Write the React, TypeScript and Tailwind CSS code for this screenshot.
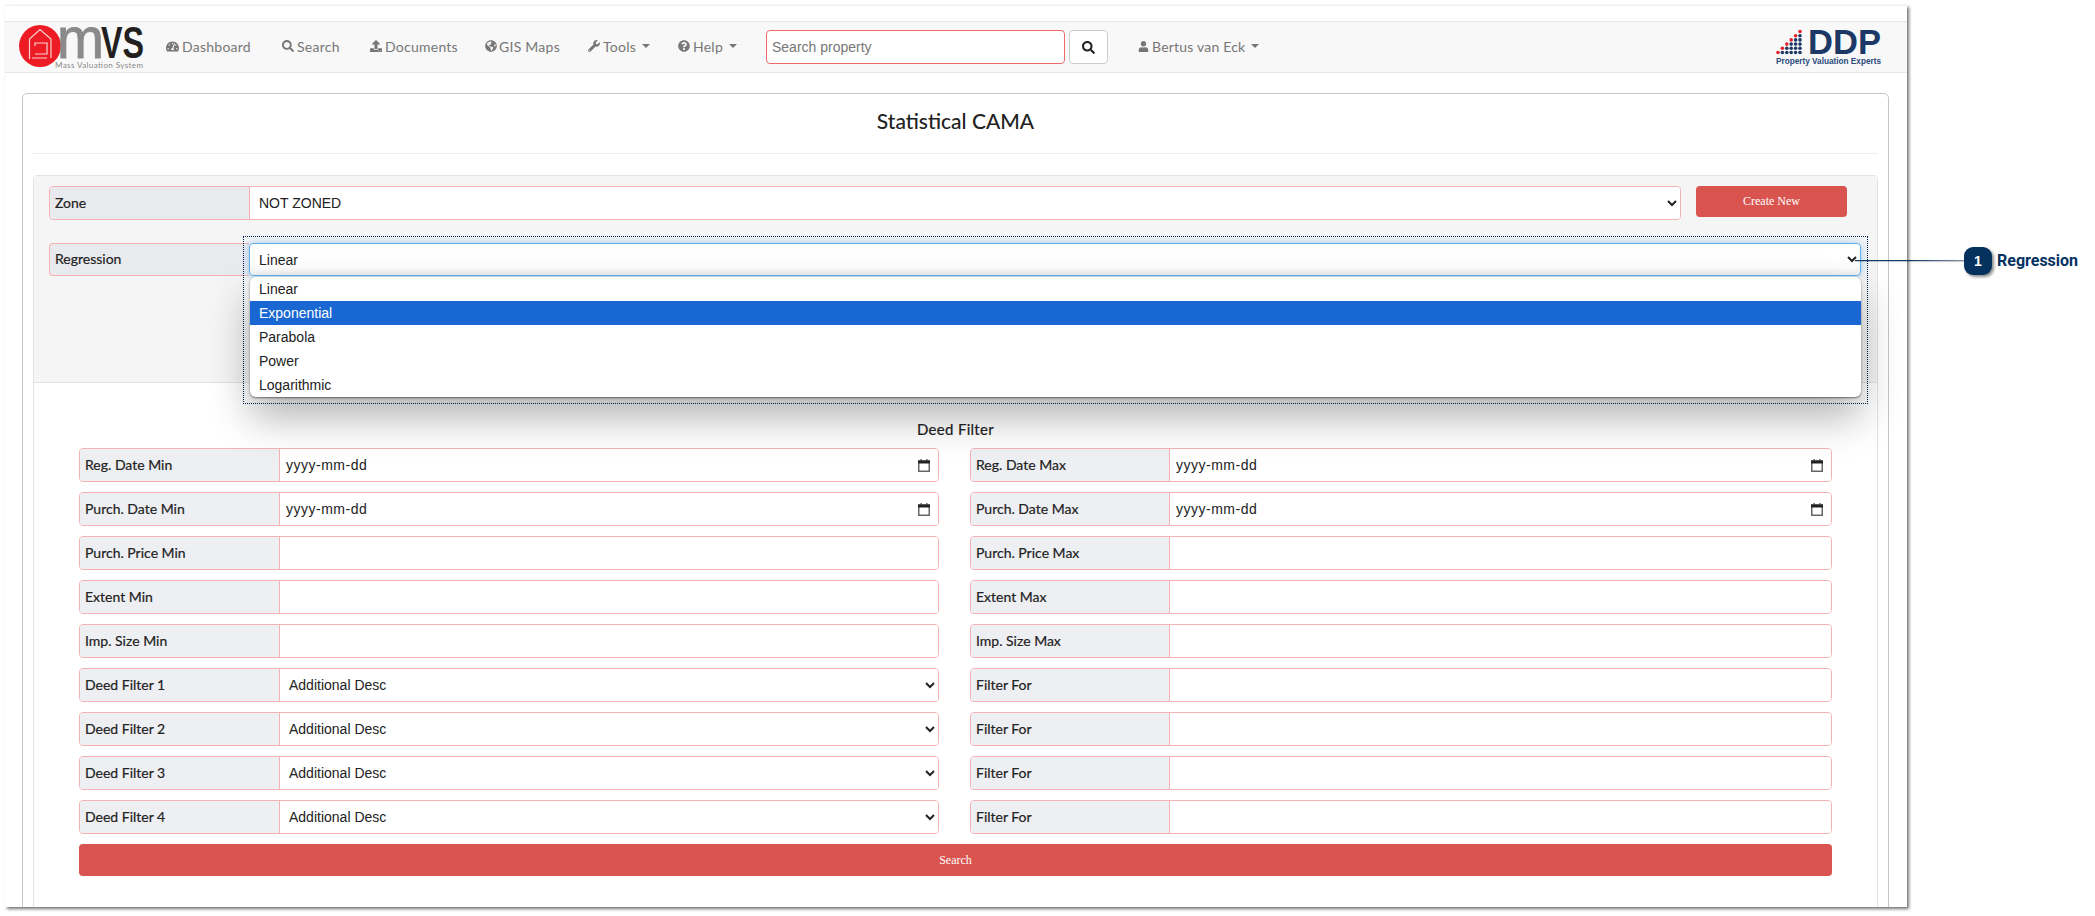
import { FaTachometerAlt, FaSearch, FaUpload, FaGlobeAmericas, FaWrench, FaQuestionCircle, FaUser } from "react-icons/fa";

const ui = "font-['Lato',sans-serif]";
const arial = "font-['Liberation_Sans',Arial,sans-serif]";
const labelText = "text-[14px] text-[#222] [-webkit-text-stroke:0.2px_#222]";

const navItems = [
  { label: "Dashboard", icon: <FaTachometerAlt size={13} />, width: 116, gap: 3 },
  { label: "Search", icon: <FaSearch size={12} />, width: 88, gap: 3 },
  { label: "Documents", icon: <FaUpload size={12} />, width: 115, gap: 3 },
  { label: "GIS Maps", icon: <FaGlobeAmericas size={12} />, width: 103, gap: 2 },
  { label: "Tools", icon: <FaWrench size={12} />, width: 90, gap: 3, caret: true },
  { label: "Help", icon: <FaQuestionCircle size={12} />, width: 88, gap: 3, caret: true },
];

const rows = [
  { left: "Reg. Date Min", right: "Reg. Date Max", type: "date" },
  { left: "Purch. Date Min", right: "Purch. Date Max", type: "date" },
  { left: "Purch. Price Min", right: "Purch. Price Max", type: "text" },
  { left: "Extent Min", right: "Extent Max", type: "text" },
  { left: "Imp. Size Min", right: "Imp. Size Max", type: "text" },
  { left: "Deed Filter 1", right: "Filter For", type: "select" },
  { left: "Deed Filter 2", right: "Filter For", type: "select" },
  { left: "Deed Filter 3", right: "Filter For", type: "select" },
  { left: "Deed Filter 4", right: "Filter For", type: "select" },
];

const options = ["Linear", "Exponential", "Parabola", "Power", "Logarithmic"];

function Caret() {
  return <span className="ml-[6px] inline-block h-0 w-0 border-x-[4px] border-t-[4px] border-x-transparent border-t-[#777]" />;
}

function MvsLogo() {
  return (
    <svg width="125" height="45" viewBox="19 25 125 45" className="shrink-0">
      <circle cx="40" cy="46" r="21" fill="#ed1c24" />
      <path d="M51 58 V39 L40 29.5 L29.5 39 V59" fill="none" stroke="#fff" strokeWidth="1.2" opacity=".8" />
      <path d="M35 46 V43 H47 V54 H35 M32 58 H47" fill="none" stroke="#fff" strokeWidth="1.2" opacity=".8" />
      <text x="57" y="58" textLength="47" lengthAdjust="spacingAndGlyphs" fontFamily="Liberation Sans" fontSize="58" fontWeight="400" stroke="#8a8a8c" strokeWidth="1" fill="#8a8a8c">m</text>
      <text x="101" y="58" textLength="43" lengthAdjust="spacingAndGlyphs" fontFamily="Liberation Sans" fontSize="44" fontWeight="700" fill="#231f20">VS</text>
      <text x="55" y="68" textLength="88" fontFamily="Lato" fontSize="8" fill="#888">Mass Valuation System</text>
    </svg>
  );
}

function DdpLogo() {
  const dots = [];
  for (let col = 0; col < 6; col++) {
    for (let row = 0; row <= col; row++) {
      const top = row === col;
      dots.push(<circle key={col + "-" + row} cx={1779 + col * 4.4} cy={53.5 - row * 4.2} r="1.8" fill={top ? "#e5202c" : "#1c3866"} />);
    }
  }
  return (
    <svg width="106" height="37" viewBox="1777 30 106 37" className="shrink-0">
      {dots}
      <text x="1809" y="55" textLength="73" lengthAdjust="spacingAndGlyphs" fontFamily="Liberation Sans" fontSize="35" fontWeight="700" fill="#1c3866">DDP</text>
      <text x="1777" y="65" textLength="105" lengthAdjust="spacingAndGlyphs" fontFamily="Liberation Sans" fontSize="9.5" fontWeight="700" fill="#2b4a7d">Property Valuation Experts</text>
    </svg>
  );
}

function CalendarIcon() {
  return (
    <svg width="12" height="13" viewBox="0 0 12 13" className="shrink-0">
      <rect x="0.75" y="2" width="10.5" height="10.25" fill="none" stroke="#666" strokeWidth="1.5" />
      <rect x="0" y="1.5" width="12" height="3" fill="#222" />
      <rect x="2.5" y="0" width="1.2" height="2" fill="#444" />
      <rect x="8.3" y="0" width="1.2" height="2" fill="#444" />
    </svg>
  );
}

function Field({ label, type, width, labelWidth }: { label: string; type: string; width: string; labelWidth: string }) {
  return (
    <div className={`flex h-[34px] overflow-hidden rounded-[4px] border border-[#f6b1b3] ${width}`}>
      <div className={`flex shrink-0 items-center border-r border-[#f6b1b3] bg-[#eeeff3] pb-[2px] pl-[5px] ${labelText} ${ui} ${labelWidth}`}>
        {label}
      </div>
      {type === "date" && (
        <div className="flex flex-1 items-center justify-between bg-white pl-[6px] pr-[8px]">
          <span className={`text-[14px] tracking-[0.5px] text-[#222] ${arial}`}>yyyy-mm-dd</span>
          <CalendarIcon />
        </div>
      )}
      {type === "text" && <input className={`min-w-0 flex-1 bg-white px-[6px] text-[14px] outline-none ${arial}`} />}
      {type === "select" && (
        <select className={`min-w-0 flex-1 bg-white pl-[5px] pr-[4px] text-[14px] text-[#222] outline-none ${arial}`}>
          <option>Additional Desc</option>
        </select>
      )}
    </div>
  );
}

export default function App() {
  return (
    <div className="relative h-[916px] w-[2095px] overflow-hidden bg-white">
      <div className="ml-[5px] mt-[5px] h-[902px] w-[1902px] overflow-hidden border-t border-[#f0f0f0] bg-white shadow-[2px_2px_3px_rgba(0,0,0,0.55)]">
        <nav className="mt-[15px] flex h-[52px] w-full items-center border-y border-[#e7e7e7] bg-[#f8f8f8] pl-[14px]">
          <MvsLogo />
          <div className={`ml-[22px] flex items-center pb-[2px] text-[14px] tracking-[0.25px] text-[#777] ${ui}`}>
            {navItems.map((item) => (
              <div key={item.label} className="flex items-center" style={{ width: item.width }}>
                {item.icon}
                <span style={{ marginLeft: item.gap }}>{item.label}</span>
                {item.caret && <Caret />}
              </div>
            ))}
          </div>
          <input
            placeholder="Search property"
            className={`h-[34px] w-[299px] rounded-[4px] border border-[#ee6a6d] bg-white px-[5px] text-[14px] text-[#333] outline-none placeholder:text-[#777] ${arial}`}
          />
          <button className="ml-[4px] flex h-[34px] w-[39px] items-center justify-center rounded-[4px] border border-[#ccc] bg-white text-[#222]">
            <FaSearch size={13} />
          </button>
          <div className={`ml-[30px] flex items-center pb-[2px] text-[14px] tracking-[0.2px] text-[#777] ${ui}`}>
            <FaUser size={11} />
            <span className="ml-[3px]">Bertus van Eck</span>
            <Caret />
          </div>
          <div className="ml-auto mr-[25px]">
            <DdpLogo />
          </div>
        </nav>

        <div className="ml-[17px] mt-[20px] h-[900px] w-[1867px] rounded-[5px] border border-[#c4c4cc] px-[10px]">
          <h1 className={`flex h-[60px] items-center justify-center border-b border-[#eee] pb-[5px] text-[21px] font-medium text-[#222] ${ui}`}>
            Statistical CAMA
          </h1>
          <div className="mt-[21px] h-[800px] rounded-t-[4px] border border-[#e3e3e3]">
            <div className="h-[207px] border-b border-[#e3e3e3] bg-[#f5f5f5] pl-[15px] pt-[10px]">
              <div className="flex items-start">
                <div className="flex h-[34px] w-[1632px] overflow-hidden rounded-[4px] border border-[#f6b1b3]">
                  <div className={`flex w-[200px] shrink-0 items-center border-r border-[#f6b1b3] bg-[#e9eaee] pb-[2px] pl-[5px] ${labelText} ${ui}`}>Zone</div>
                  <select className={`min-w-0 flex-1 bg-white pl-[5px] pr-[4px] text-[14px] text-[#222] outline-none ${arial}`}>
                    <option>NOT ZONED</option>
                  </select>
                </div>
                <button className="ml-[15px] flex h-[31px] w-[151px] items-start justify-center rounded-[4px] bg-[#d9534f] pt-[8px] font-['Liberation_Serif',serif] text-[12px] leading-[14px] text-white">
                  Create New
                </button>
              </div>
              <div className="relative mt-[23px] flex h-[33px] w-[1812px]">
                <div className={`flex w-[200px] shrink-0 items-center rounded-l-[4px] border border-r-0 border-[#f6b1b3] bg-[#e9eaee] pb-[2px] pl-[5px] ${labelText} ${ui}`}>Regression</div>
                <select className={`min-w-0 flex-1 rounded-[4px] border border-[#66afe9] bg-white pl-[5px] pr-[4px] text-[14px] text-[#222] shadow-[0_0_8px_rgba(102,175,233,0.6),inset_0_-8px_8px_-6px_rgba(0,0,0,0.1)] outline-none ${arial}`}>
                  <option>Linear</option>
                </select>
                <ul className={`absolute left-[201px] top-[34px] z-10 w-[1611px] overflow-hidden rounded-[6px] bg-white text-[14px] text-[#222] shadow-[0_1px_2px_rgba(0,0,0,0.5),0_20px_40px_rgba(0,0,0,0.3)] ${arial}`}>
                  {options.map((option) => (
                    <li key={option} className={`flex h-[24px] items-center pl-[9px] ${option === "Exponential" ? "bg-[#1967d2] text-white" : ""}`}>
                      {option}
                    </li>
                  ))}
                </ul>
              </div>
            </div>

            <div className={`pt-[37px] text-center text-[15px] leading-[18px] tracking-[0.3px] text-[#222] [-webkit-text-stroke:0.2px_#222] ${ui}`}>Deed Filter</div>
            <div className="ml-[45px] mt-[10px] grid w-[1753px] grid-cols-[860px_862px] gap-x-[31px] gap-y-[10px]">
              {rows.map((row, i) => (
                <div key={i} className="contents">
                  <Field label={row.left} type={row.type} width="w-[860px]" labelWidth="w-[200px]" />
                  <Field label={row.right} type={row.type === "date" ? "date" : "text"} width="w-[862px]" labelWidth="w-[199px]" />
                </div>
              ))}
              <button className="col-span-2 h-[32px] rounded-[4px] bg-[#d9534f] font-['Liberation_Serif',serif] text-[12px] text-white">Search</button>
            </div>
          </div>
        </div>
      </div>

      <div className="absolute left-[243px] top-[236px] z-20 h-[168px] w-[1625px] border border-dotted border-[#001f4d]" />
      <div className="absolute left-[1855px] top-[260px] z-20 h-px w-[109px] bg-gradient-to-r from-[#0b3a6b] via-[#0b3a6b] to-[#7f93ad] shadow-[0_1px_1px_rgba(0,0,0,0.25)]" />
      <div className={`absolute left-[1964px] top-[247px] z-20 flex h-[28px] w-[28px] items-center justify-center rounded-[9px] bg-[#05315f] text-[14px] font-bold text-white shadow-[2px_2px_3px_rgba(0,0,0,0.45)] ${arial}`}>1</div>
      <div className="absolute left-[1997px] top-[252px] z-20 font-['Roboto',sans-serif] text-[16px] font-bold leading-[18px] text-[#05315f]">Regression</div>
    </div>
  );
}
